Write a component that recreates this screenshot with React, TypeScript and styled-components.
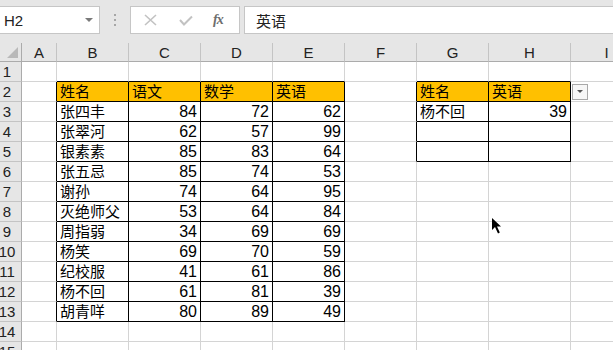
import styled, { createGlobalStyle } from 'styled-components'

const GlobalStyle = createGlobalStyle`
  html, body {
    margin: 0;
    padding: 0;
    overflow: hidden;
    background: #ffffff;
  }
`

const FONT = `"Liberation Sans", "Noto Sans CJK SC", sans-serif`
const GRID = '#d4d4d4'
const INK = '#000000'
const ORANGE = '#ffc000'

const COLS = ['A', 'B', 'C', 'D', 'E', 'F', 'G', 'H', 'I']
const WIDTHS = [35, 72, 72, 72, 72, 72, 72, 82, 72]
const ROWS = Array.from({ length: 15 }, (_, i) => i + 1)

const names = ['张四丰', '张翠河', '银素素', '张五忌', '谢孙', '灭绝师父', '周指弱', '杨笑', '纪校服', '杨不回', '胡青咩']
const scores = [
  [84, 72, 62],
  [62, 57, 99],
  [85, 83, 64],
  [85, 74, 53],
  [74, 64, 95],
  [53, 64, 84],
  [34, 69, 69],
  [69, 70, 59],
  [41, 61, 86],
  [61, 81, 39],
  [80, 89, 49],
]

type CellData = { text: string; numeric?: boolean; fill?: boolean }

// col index: 0 = A
function cellAt(c: number, r: number): CellData | null {
  if (r === 2) {
    const head: Record<number, string> = { 1: '姓名', 2: '语文', 3: '数学', 4: '英语', 6: '姓名', 7: '英语' }
    if (head[c]) return { text: head[c], fill: true }
  }
  if (r >= 3 && r <= 13) {
    const i = r - 3
    if (c === 1) return { text: names[i] }
    if (c >= 2 && c <= 4) return { text: String(scores[i][c - 2]), numeric: true }
  }
  if (r === 3 && c === 6) return { text: '杨不回' }
  if (r === 3 && c === 7) return { text: '39', numeric: true }
  return null
}

function inTable(c: number, r: number) {
  const first = c >= 1 && c <= 4 && r >= 2 && r <= 13
  const second = c >= 6 && c <= 7 && r >= 2 && r <= 5
  return first || second
}

const Window = styled.div`
  position: relative;
  width: 613px;
  height: 350px;
  overflow: hidden;
  background: #e6e6e6;
  font-family: ${FONT};
`

const FormulaBar = styled.div`
  display: flex;
  align-items: flex-start;
  height: 43px;
  padding-top: 6px;
  box-sizing: border-box;
`

const NameBox = styled.div`
  display: flex;
  align-items: center;
  justify-content: space-between;
  width: 100px;
  height: 28px;
  box-sizing: border-box;
  padding: 0 6px 0 4px;
  background: #ffffff;
  border: 1px solid #c6c6c6;
  border-left: none;
  font-size: 15px;
  color: #222;
`

const Caret = styled.span`
  width: 0;
  height: 0;
  border-left: 4px solid transparent;
  border-right: 4px solid transparent;
  border-top: 4px solid #7a7a7a;
`

const Grip = styled.div`
  display: flex;
  flex-direction: column;
  align-items: center;
  justify-content: center;
  gap: 3px;
  width: 30px;
  height: 28px;

  span {
    width: 2px;
    height: 2px;
    background: #a6a6a6;
  }
`

const FnBox = styled.div`
  display: flex;
  align-items: center;
  width: 110px;
  height: 28px;
  box-sizing: border-box;
  padding-left: 13px;
  gap: 22px;
  background: #ffffff;
  border: 1px solid #c6c6c6;
`

const Fx = styled.span`
  font-family: "Liberation Serif", serif;
  font-style: italic;
  font-weight: bold;
  font-size: 14px;
  color: #6e6e6e;
  letter-spacing: -1px;
  margin-left: -2px;
`

const Input = styled.div`
  display: flex;
  align-items: center;
  flex: 1;
  height: 28px;
  margin-left: 4px;
  box-sizing: border-box;
  padding-left: 11px;
  background: #ffffff;
  border: 1px solid #c6c6c6;
  border-right: none;
  font-size: 15px;
  color: #222;
`

const Sheet = styled.div`
  display: grid;
  grid-template-columns: 22px ${WIDTHS.map((w) => `${w}px`).join(' ')};
  grid-template-rows: 19px;
  grid-auto-rows: 20px;
  background: #ffffff;
`

const Corner = styled.div`
  position: relative;
  background: #e6e6e6;
  border-right: 1px solid #ababab;
  border-bottom: 1px solid #ababab;

  &::after {
    content: '';
    position: absolute;
    right: 3px;
    bottom: 3px;
    width: 0;
    height: 0;
    border-left: 11px solid transparent;
    border-bottom: 11px solid #b9b9b9;
  }
`

const ColHead = styled.div`
  display: flex;
  align-items: flex-end;
  justify-content: center;
  background: #e6e6e6;
  border-right: 1px solid #c4c4c4;
  border-bottom: 1px solid #ababab;
  font-size: 15px;
  line-height: 17px;
  color: #222;
`

const RowHead = styled.div`
  display: flex;
  align-items: center;
  justify-content: center;
  padding-right: 7px;
  background: #e6e6e6;
  border-right: 1px solid #ababab;
  border-bottom: 1px solid #c4c4c4;
  font-size: 15px;
  color: #222;
  white-space: nowrap;
`

const Cell = styled.div<{ $right: string; $bottom: string; $fill?: boolean; $numeric?: boolean }>`
  display: flex;
  align-items: center;
  justify-content: ${({ $numeric }) => ($numeric ? 'flex-end' : 'flex-start')};
  padding: 0 3px 0 3px;
  overflow: visible;
  white-space: nowrap;
  background: ${({ $fill }) => ($fill ? ORANGE : '#ffffff')};
  border-right: 1px solid ${({ $right }) => $right};
  border-bottom: 1px solid ${({ $bottom }) => $bottom};
  font-size: ${({ $numeric }) => ($numeric ? '16px' : '15px')};
  line-height: 19px;
  color: #000;
`

const FilterButton = styled.div`
  display: flex;
  align-items: center;
  justify-content: center;
  width: 16px;
  height: 16px;
  margin-left: -2px;
  box-sizing: border-box;
  background: #f7f7f7;
  border: 1px solid #a9a9a9;

  &::after {
    content: '';
    border-left: 3px solid transparent;
    border-right: 3px solid transparent;
    border-top: 3px solid #555;
  }
`

const Pointer = styled.svg`
  position: absolute;
  left: 492px;
  top: 218px;
`

function Cross() {
  return (
    <svg width="13" height="12" viewBox="0 0 13 12">
      <path d="M1 1 L12 11 M12 1 L1 11" stroke="#c2c2c2" strokeWidth="1.6" fill="none" />
    </svg>
  )
}

function Check() {
  return (
    <svg width="14" height="11" viewBox="0 0 14 11">
      <path d="M1 5 L5 9.5 L13 1.5" stroke="#c2c2c2" strokeWidth="2" fill="none" />
    </svg>
  )
}

export default function App() {
  return (
    <>
      <GlobalStyle />
      <Window>
        <FormulaBar>
          <NameBox>
            <span>H2</span>
            <Caret />
          </NameBox>
          <Grip>
            <span />
            <span />
            <span />
          </Grip>
          <FnBox>
            <Cross />
            <Check />
            <Fx>fx</Fx>
          </FnBox>
          <Input>英语</Input>
        </FormulaBar>

        <Sheet>
          <Corner />
          {COLS.map((col) => (
            <ColHead key={col}>{col}</ColHead>
          ))}
          {ROWS.map((r) => [
            <RowHead key={`h${r}`}>{r}</RowHead>,
            ...COLS.map((_, c) => {
              const data = cellAt(c, r)
              const right = inTable(c, r) || inTable(c + 1, r) ? INK : GRID
              const bottom = inTable(c, r) || inTable(c, r + 1) ? INK : GRID
              return (
                <Cell
                  key={`${c}-${r}`}
                  $right={right}
                  $bottom={bottom}
                  $fill={data?.fill}
                  $numeric={data?.numeric}
                >
                  {data?.text}
                  {c === 8 && r === 2 && <FilterButton />}
                </Cell>
              )
            }),
          ])}
        </Sheet>

        <Pointer width="10" height="17" viewBox="0 0 10 17">
          <path d="M0 0 L0 12 L3 9 L6 15.5 L7.8 14.6 L5 8.5 L9 8.5 Z" fill="#000" />
        </Pointer>
      </Window>
    </>
  )
}
